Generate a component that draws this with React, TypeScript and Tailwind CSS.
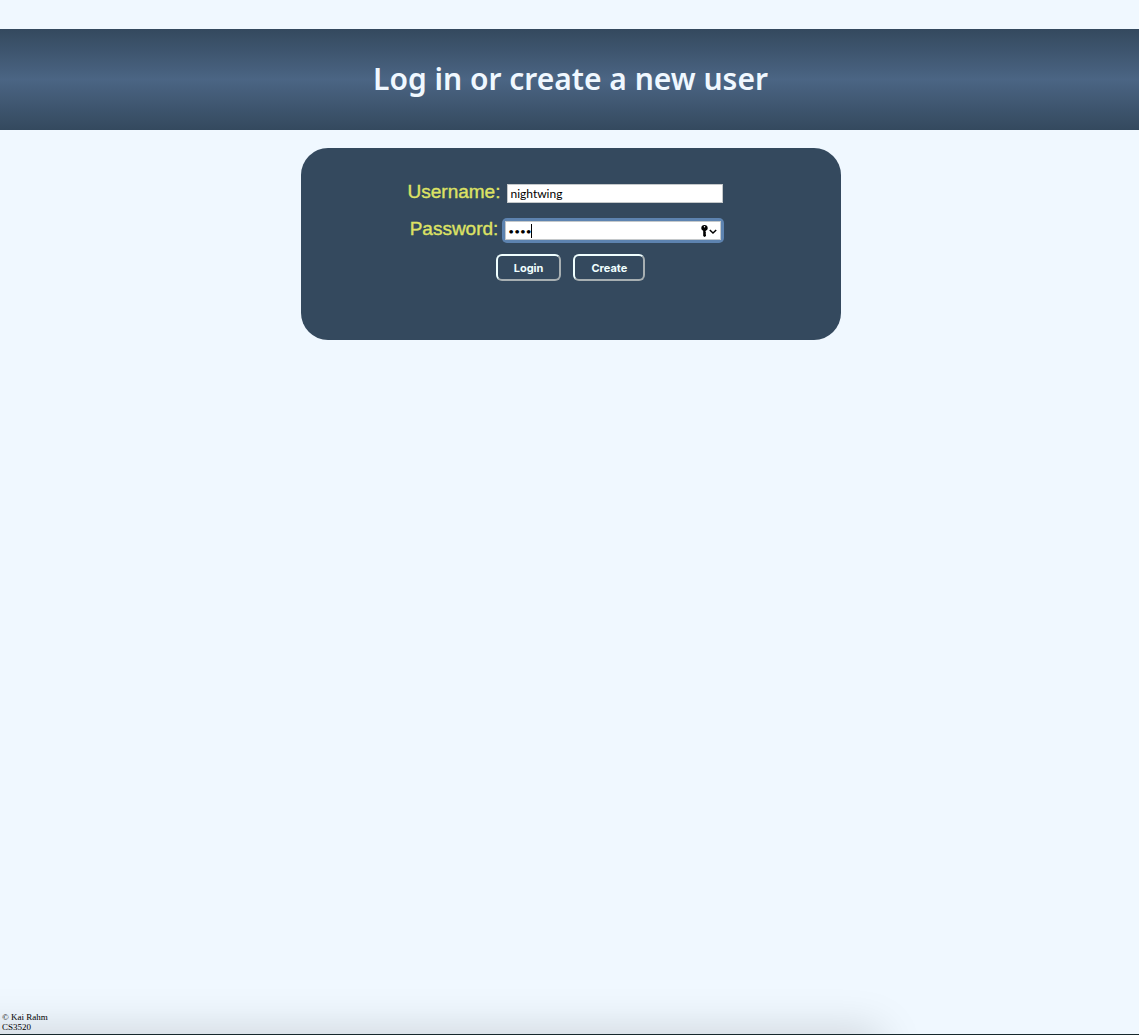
import { useState } from "react";

function KeyIcon() {
  return (
    <svg className="h-3 w-2" viewBox="0 0 8 12" fill="black" aria-hidden="true">
      <path
        fillRule="evenodd"
        d="M3.500 0C1.500 0 .3 1.200.3 3c0 1.300.700 2.300 1.900 2.800V11l1.300 1 1.500-1V9.600L4.400 9l.6-.7V7.400l-.6-.5.4-1.100C6 5.300 6.700 4.300 6.700 3c0-1.800-1.200-3-3.200-3Zm0 1a.7.7 0 1 1 0 1.400.7.7 0 0 1 0-1.400Z"
      />
    </svg>
  );
}

function ChevronIcon() {
  return (
    <svg className="h-2 w-2" viewBox="0 0 8 8" fill="none" stroke="black" strokeWidth="1.500" aria-hidden="true">
      <path d="M.8 3 4 6l3.200-3" />
    </svg>
  );
}

const labelClass = "font-['Liberation_Sans'] text-[19px] leading-6 text-[#dde264] [-webkit-text-stroke:0.400px_#dde264]";
const inputClass =
  "block h-[19px] w-full rounded-none border border-[#c4c8ca] bg-white px-0.5 font-[Lato] text-black outline-none";
const buttonClass =
  "h-[27px] rounded-md border-2 border-t-[azure] border-l-[azure] border-r-[#a7afb2] border-b-[#a7afb2] px-4 pt-px font-[Inter] text-[11px] font-bold text-[azure]";

export default function App() {
  const [username, setUsername] = useState("nightwing");
  const [password, setPassword] = useState("wing");

  return (
    <div className="flex min-h-screen flex-col bg-[#f0f8ff] pt-[29px]">
      <header className="bg-linear-to-b from-[#34495e] via-[#4b6584] to-[#34495e] pt-[31px] pb-[33px] pl-0.5 text-center">
        <h1 className="font-['Noto_Sans',sans-serif] text-3xl leading-[37px] font-semibold text-[#f0f8ff]">
          Log in or create a new user
        </h1>
      </header>
      <main className="flex-1 pt-[18px] pl-0.5">
        <form
          className="mx-auto w-full max-w-[540px] rounded-[27px] bg-[#34495e] pt-8 pb-[59px]"
          onSubmit={(e) => e.preventDefault()}
        >
          <div className="flex items-start justify-center pr-2.5">
            <label htmlFor="username" className={labelClass}>
              Username:
            </label>
            <div className="mt-1 ml-[7px] w-[216px]">
              <input
                id="username"
                className={inputClass + " text-xs"}
                value={username}
                onChange={(e) => setUsername(e.target.value)}
              />
            </div>
          </div>
          <div className="mt-[13px] flex items-start justify-center pr-2.5">
            <label htmlFor="password" className={labelClass}>
              Password:
            </label>
            <div className="relative mt-1 ml-[7px] w-[216px] rounded-xs ring-3 ring-[#5d83b0]">
              <input
                id="password"
                type="password"
                className={inputClass + " text-[10px]"}
                value={password}
                onChange={(e) => setPassword(e.target.value)}
              />
              <span className="absolute top-[3px] left-[26px] h-3.5 w-px bg-black" />
              <span className="absolute top-1 right-1 flex items-center">
                <KeyIcon />
                <ChevronIcon />
              </span>
            </div>
          </div>
          <div className="mt-[13px] flex justify-center gap-3">
            <button type="submit" className={buttonClass}>
              Login
            </button>
            <button type="button" className={buttonClass}>
              Create
            </button>
          </div>
        </form>
      </main>
      <footer className="relative border-b border-[#17282c] pb-0.5 pl-0.5 font-['Liberation_Serif'] text-[9px] leading-[10px] text-black">
        <div className="absolute inset-x-0 bottom-0 h-12 overflow-hidden">
          <div className="absolute top-full right-[23%] -left-10 h-10 shadow-[0_0_44px_4px_#00000026]" />
        </div>
        <div className="relative">
          <p>© Kai Rahm</p>
          <p>CS3520</p>
        </div>
      </footer>
    </div>
  );
}
